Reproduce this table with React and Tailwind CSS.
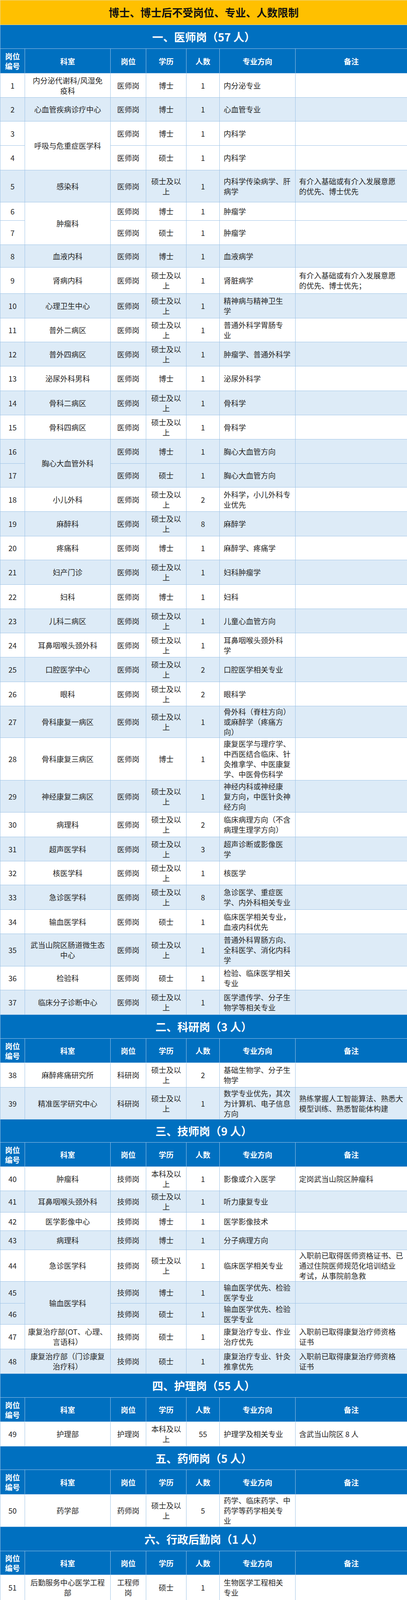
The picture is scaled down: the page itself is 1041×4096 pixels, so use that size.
import React from "react";

// --- column widths (scaled to 1041px) ---
const COLS = ["w-[63px]", "w-[219px]", "w-[91px]", "w-[103px]", "w-[85px]", "w-[194px]", "w-[286px]"];
const HEAD = ["岗位\n编号", "科室", "岗位", "学历", "人数", "专业方向", "备注"];

const MS = "硕士及以\n上";
const BK = "本科及以\n上";

// row: id, dept (null = merged above), post, edu, num, major, note, height class, alt bg, rowSpan
const r = (id, dept, post, edu, num, major, note, h, alt, span = 1) => ({ id, dept, post, edu, num, major, note, h, alt, span });

const SECTIONS = [
    {
        title: "一、医师岗（57 人）",
        th: "h-[61px]",
        hh: "h-[63px]",
        rows: [
            r(1, "内分泌代谢科/风湿免\n疫科", "医师岗", "博士", "1", "内分泌专业", "", "h-[62px]", false),
            r(2, "心血管疾病诊疗中心", "医师岗", "博士", "1", "心血管专业", "", "h-[61px]", true),
            r(3, "呼吸与危重症医学科", "医师岗", "博士", "1", "内科学", "", "h-[62px]", false, 2),
            r(4, null, "医师岗", "硕士", "1", "内科学", "", "h-[63px]", false),
            r(5, "感染科", "医师岗", MS, "1", "内科学传染病学、肝\n病学", "有介入基础或有介入发展意愿\n的优先、博士优先", "h-[82px]", true),
            r(6, "肿瘤科", "医师岗", "博士", "1", "肿瘤学", "", "h-[47px]", false, 2),
            r(7, null, "医师岗", "硕士", "1", "肿瘤学", "", "h-[62px]", false),
            r(8, "血液内科", "医师岗", "博士", "1", "血液病学", "", "h-[58px]", true),
            r(9, "肾病内科", "医师岗", MS, "1", "肾脏病学", "有介入基础或有介入发展意愿\n的优先、博士优先；", "h-[67px]", false),
            r(10, "心理卫生中心", "医师岗", MS, "1", "精神病与精神卫生\n学", "", "h-[63px]", true),
            r(11, "普外二病区", "医师岗", MS, "1", "普通外科学胃肠专\n业", "", "h-[61px]", false),
            r(12, "普外四病区", "医师岗", MS, "1", "肿瘤学、普通外科学", "", "h-[62px]", true),
            r(13, "泌尿外科男科", "医师岗", "博士", "1", "泌尿外科学", "", "h-[63px]", false),
            r(14, "骨科二病区", "医师岗", MS, "1", "骨科学", "", "h-[62px]", true),
            r(15, "骨科四病区", "医师岗", MS, "1", "骨科学", "", "h-[62px]", false),
            r(16, "胸心大血管外科", "医师岗", "博士", "1", "胸心大血管方向", "", "h-[62px]", true, 2),
            r(17, null, "医师岗", "硕士", "1", "胸心大血管方向", "", "h-[61px]", true),
            r(18, "小儿外科", "医师岗", MS, "2", "外科学，小儿外科专\n业优先", "", "h-[62px]", false),
            r(19, "麻醉科", "医师岗", MS, "8", "麻醉学", "", "h-[63px]", true),
            r(20, "疼痛科", "医师岗", "博士", "1", "麻醉学、疼痛学", "", "h-[61px]", false),
            r(21, "妇产门诊", "医师岗", MS, "1", "妇科肿瘤学", "", "h-[63px]", true),
            r(22, "妇科", "医师岗", "博士", "1", "妇科", "", "h-[62px]", false),
            r(23, "儿科二病区", "医师岗", MS, "1", "儿童心血管方向", "", "h-[62px]", true),
            r(24, "耳鼻咽喉头颈外科", "医师岗", MS, "1", "耳鼻咽喉头颈外科\n学", "", "h-[62px]", false),
            r(25, "口腔医学中心", "医师岗", MS, "2", "口腔医学相关专业", "", "h-[63px]", true),
            r(26, "眼科", "医师岗", MS, "2", "眼科学", "", "h-[62px]", false),
            r(27, "骨科康复一病区", "医师岗", MS, "1", "骨外科（脊柱方向）\n或麻醉学（疼痛方\n向）", "", "h-[81px]", true),
            r(28, "骨科康复三病区", "医师岗", "博士", "1", "康复医学与理疗学、\n中西医结合临床、针\n灸推拿学、中医康复\n学、中医骨伤科学", "", "h-[109px]", false),
            r(29, "神经康复二病区", "医师岗", MS, "1", "神经内科或神经康\n复方向，中医针灸神\n经方向", "", "h-[82px]", true),
            r(30, "病理科", "医师岗", MS, "2", "临床病理方向（不含\n病理生理学方向）", "", "h-[63px]", false),
            r(31, "超声医学科", "医师岗", MS, "3", "超声诊断或影像医\n学", "", "h-[62px]", true),
            r(32, "核医学科", "医师岗", MS, "1", "核医学", "", "h-[61px]", false),
            r(33, "急诊医学科", "医师岗", MS, "8", "急诊医学、重症医\n学、内外科相关专业", "", "h-[63px]", true),
            r(34, "输血医学科", "医师岗", "硕士", "1", "临床医学相关专业，\n血液内科优先", "", "h-[62px]", false),
            r(35, "武当山院区肠道微生态\n中心", "医师岗", MS, "1", "普通外科胃肠方向、\n全科医学、消化内科\n学", "", "h-[83px]", true),
            r(36, "检验科", "医师岗", "硕士", "1", "检验、临床医学相关\n专业", "", "h-[61px]", false),
            r(37, "临床分子诊断中心", "医师岗", MS, "1", "医学遗传学、分子生\n物学等相关专业", "", "h-[63px]", true),
        ],
    },
    {
        title: "二、科研岗（3 人）",
        th: "h-[61px]",
        hh: "h-[62px]",
        rows: [
            r(38, "麻醉疼痛研究所", "科研岗", MS, "2", "基础生物学、分子生\n物学", "", "h-[63px]", false),
            r(39, "精准医学研究中心", "科研岗", MS, "1", "数学专业优先，其次\n为计算机、电子信息\n方向", "熟练掌握人工智能算法、熟悉大\n模型训练、熟悉智能体构建", "h-[82px]", true),
        ],
    },
    {
        title: "三、技师岗（9 人）",
        th: "h-[59px]",
        hh: "h-[62px]",
        rows: [
            r(40, "肿瘤科", "技师岗", BK, "1", "影像或介入医学", "定岗武当山院区肿瘤科", "h-[62px]", false),
            r(41, "耳鼻咽喉头颈外科", "技师岗", MS, "1", "听力康复专业", "", "h-[55px]", true),
            r(42, "医学影像中心", "技师岗", "博士", "1", "医学影像技术", "", "h-[47px]", false),
            r(43, "病理科", "技师岗", "博士", "1", "分子病理方向", "", "h-[49px]", true),
            r(44, "急诊医学科", "技师岗", MS, "1", "临床医学相关专业", "入职前已取得医师资格证书、已\n通过住院医师规范化培训结业\n考试，从事院前急救", "h-[81px]", false),
            r(45, "输血医学科", "技师岗", "博士", "1", "输血医学优先、检验\n医学专业", "", "h-[56px]", true, 2),
            r(46, null, "技师岗", "硕士", "1", "输血医学优先、检验\n医学专业", "", "h-[54px]", true),
            r(47, "康复治疗部(OT、心理、\n言语科）", "技师岗", "硕士", "1", "康复治疗专业、作业\n治疗优先", "入职前已取得康复治疗师资格\n证书", "h-[63px]", false),
            r(48, "康复治疗部（门诊康复\n治疗科）", "技师岗", "硕士", "1", "康复治疗专业、针灸\n推拿优先", "入职前已取得康复治疗师资格\n证书", "h-[63px]", true),
        ],
    },
    {
        title: "四、护理岗（55 人）",
        th: "h-[61px]",
        hh: "h-[62px]",
        rows: [
            r(49, "护理部", "护理岗", BK, "55", "护理学及相关专业", "含武当山院区 8 人", "h-[63px]", false),
        ],
    },
    {
        title: "五、药师岗（5 人）",
        th: "h-[60px]",
        hh: "h-[63px]",
        rows: [
            r(50, "药学部", "药师岗", MS, "5", "药学、临床药学、中\n药学等药学相关专\n业", "", "h-[83px]", false),
        ],
    },
    {
        title: "六、行政后勤岗（1 人）",
        th: "h-[62px]",
        hh: "h-[61px]",
        rows: [
            r(51, "后勤服务中心医学工程\n部", "工程师\n岗", "硕士", "1", "生物医学工程相关\n专业", "", "h-[65px]", false),
        ],
    },
];

const cell = "border border-[#9DC3E6] align-middle whitespace-pre text-[19px] leading-[26px] p-0";
const head = "border border-[#9DC3E6] align-middle whitespace-pre text-[19px] leading-[25px] font-bold text-white text-center bg-[#0070C0] p-0";

const Row = ({ row }) => (
    <tr className={`${row.h} ${row.alt ? "bg-[#DDEBF7]" : "bg-white"}`}>
        <td className={`${cell} text-center`}>{row.id}</td>
        {row.dept !== null && (
            <td rowSpan={row.span} className={`${cell} text-center px-1`}>{row.dept}</td>
        )}
        <td className={`${cell} text-center`}>{row.post}</td>
        <td className={`${cell} text-center`}>{row.edu}</td>
        <td className={`${cell} text-center`}>{row.num}</td>
        <td className={`${cell} text-left pl-[10px]`}>{row.major}</td>
        <td className={`${cell} text-left pl-[9px]`}>{row.note}</td>
    </tr>
);

const Section = ({ s }) => (
    <>
        <tr className={s.th}>
            <td colSpan={7} className="border border-[#9DC3E6] bg-[#0070C0] text-white font-bold text-[28px] text-center align-middle p-0">
                {s.title}
            </td>
        </tr>
        <tr className={s.hh}>
            {HEAD.map((t) => (
                <td key={t} className={head}>{t}</td>
            ))}
        </tr>
        {s.rows.map((row) => (
            <Row key={row.id} row={row} />
        ))}
    </>
);

export default function App() {
    return (
        <div className="w-[1041px] bg-white text-[#262626] font-['Noto_Sans_CJK_SC',sans-serif]">
            <table className="w-[1041px] table-fixed border-collapse">
                <colgroup>
                    {COLS.map((c, i) => (
                        <col key={i} className={c} />
                    ))}
                </colgroup>
                <tbody>
                    <tr className="h-[63px]">
                        <td colSpan={7} className="border border-[#E8D9A0] bg-[#FFC000] text-[#111] font-bold text-[27px] text-center align-middle p-0">
                            博士、博士后不受岗位、专业、人数限制
                        </td>
                    </tr>
                    {SECTIONS.map((s) => (
                        <Section key={s.title} s={s} />
                    ))}
                </tbody>
            </table>
        </div>
    );
}
